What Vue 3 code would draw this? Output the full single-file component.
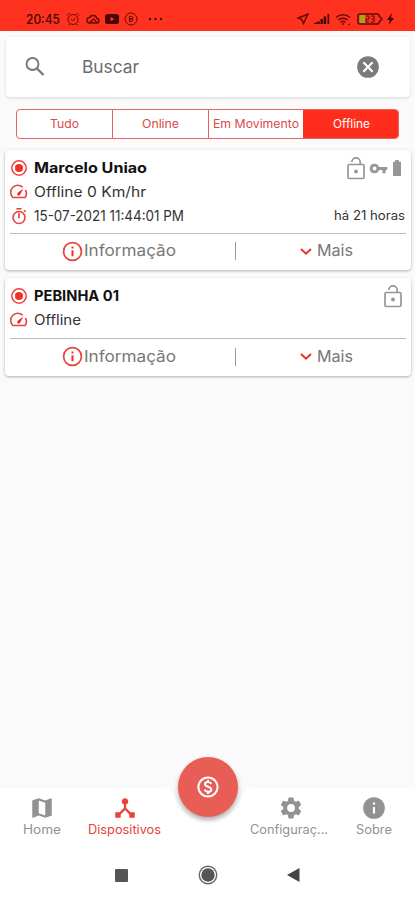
<script setup>
const devices = [
  { name: 'Marcelo Uniao', nameW: 113, status: 'Offline 0 Km/hr', statusW: 112, time: '15-07-2021 11:44:01 PM', ago: 'há 21 horas', full: true },
  { name: 'PEBINHA 01', nameW: 85, status: 'Offline', statusW: 47, full: false },
]
const tabs = [
  { label: 'Tudo', w: 29 },
  { label: 'Online', w: 37 },
  { label: 'Em Movimento', w: 86 },
  { label: 'Offline', w: 37, active: true },
]
</script>

<template>
  <div class="screen">
    <header class="status">
      <svg class="clock" width="36" height="16"><text x="0" y="13" textLength="34" lengthAdjust="spacingAndGlyphs">20:45</text></svg>
      <svg class="ic alarm" width="14" height="14" viewBox="0 0 14 14"><circle cx="7" cy="7.500" r="5" /><path d="M1 3.500 3.500 1M13 3.500 10.500 1M4.800 7l2 2 2.500-3M3.500 12l-1 1.500M10.500 12l1 1.500" /></svg>
      <svg class="ic cloud" width="15" height="12" viewBox="0 0 15 12"><path class="thick" d="M4 10h7.500a2.300 2.300 0 0 0 .3-4.600A4 4 0 0 0 4.500 4.500 2.800 2.800 0 0 0 4 10ZM5 9.500 8.500 6l3 3" /></svg>
      <svg class="tube" width="14" height="10" viewBox="0 0 14 10"><rect width="14" height="10" rx="2.500" fill="#470704" /><path d="M5.500 2.700v4.600L9.500 5z" fill="#ff321f" /></svg>
      <svg class="ic rec" width="14" height="14" viewBox="0 0 14 14"><circle cx="7" cy="7" r="6" /><path d="M5.500 4.500v5h2.300a1.300 1.300 0 0 0 0-2.500H5.500h2a1.200 1.200 0 0 0 0-2.500z" /></svg>
      <svg class="dots" width="15" height="4" viewBox="0 0 15 4"><circle cx="2" cy="2" r="1.200" /><circle cx="7.500" cy="2" r="1.200" /><circle cx="13" cy="2" r="1.200" /></svg>
      <span class="grow"></span>
      <svg class="ic nav-arrow" width="12" height="12" viewBox="0 0 12 12"><path class="thick" d="M10.800 1.200 1.200 5l3.600 1.500L6.500 10.500z" /></svg>
      <svg class="signal" width="17" height="12" viewBox="0 0 17 12"><path d="M0 11 4 9v2zM4.300 8.500h2.500V11H4.300zM7.500 6H10v5H7.500zM10.700 3.500h2.500V11h-2.500zM14.500 1h1.700v10h-1.700z" /></svg>
      <svg class="ic wifi" width="17" height="13" viewBox="0 0 17 13"><path class="thick" d="M1 4.500a10.500 10.500 0 0 1 14 0M3.300 7a7 7 0 0 1 9.400 0M5.500 9.300a4 4 0 0 1 5 0M7 11h2M13.500 11.500h1.500" /></svg>
      <svg class="ic battery" width="27" height="12" viewBox="0 0 27 12"><rect x="2.500" y="2" width="5.500" height="8" fill="#a5a51b" stroke="none" /><path class="thick" d="M3 1h17q2 0 2.500 2.500L25 6l-2.500 2.500Q22 11 20 11H3Q1 11 1 9V3q0-2 2-2z" /><path d="M9 3h3v3H9v3h3M14 3h3v6h-3M14.500 6H17" /></svg>
      <svg class="bolt" width="7" height="12" viewBox="0 0 7 12"><path d="M5 0 0 7h2.800L1.800 12 7 5H4.200z" /></svg>
    </header>

    <main>
      <div class="search">
        <svg class="mag" width="28" height="28" viewBox="0 0 28 28"><circle cx="11.500" cy="11" r="6" fill="none" stroke="#777" stroke-width="1.900" /><path d="m16 15.500 6.500 6.500" stroke="#777" stroke-width="2.300" /></svg>
        <svg class="grow-text" width="62" height="26"><text x="0" y="19" textLength="57" lengthAdjust="spacingAndGlyphs">Buscar</text></svg>
        <span class="grow"></span>
        <svg class="clear" width="26" height="26" viewBox="0 0 24 24"><path d="M12 2a10 10 0 1 0 0 20 10 10 0 0 0 0-20zm5 13.590L15.590 17 12 13.410 8.410 17 7 15.590 10.590 12 7 8.410 8.410 7 12 10.590 15.590 7 17 8.410 13.410 12z" /></svg>
      </div>

      <div class="tabs">
        <div v-for="t in tabs" :key="t.label" class="tab" :class="{ active: t.active }">
          <svg :width="t.w" height="16"><text x="0" y="12" :textLength="t.w" lengthAdjust="spacingAndGlyphs">{{ t.label }}</text></svg>
        </div>
      </div>

      <section v-for="d in devices" :key="d.name" class="card" :class="{ full: d.full }">
        <div class="row title">
          <svg class="red" width="18" height="18" viewBox="0 0 18 18"><circle cx="9" cy="9" r="7.200" fill="none" stroke="#e8423c" stroke-width="1.500" /><circle cx="9" cy="9" r="4" /></svg>
          <svg class="label name" :width="d.nameW" height="22"><text x="0" y="15.500" :textLength="d.nameW" lengthAdjust="spacingAndGlyphs">{{ d.name }}</text></svg>
          <span class="grow"></span>
          <svg class="lock" width="18" height="23" viewBox="0 0 18 23"><rect x="1" y="7.500" width="16" height="14" rx="1.200" /><path d="M4.800 5A4.200 4.200 0 0 1 13.200 5v2.500" /><circle class="dot" cx="9" cy="14.500" r="1.900" /></svg>
          <template v-if="d.full">
            <svg class="key" width="19" height="19" viewBox="0 0 24 24"><path d="M12.650 10A6 6 0 0 0 7 6a6 6 0 1 0 5.650 8H17v4h4v-4h2v-4zM7 14.500a2.500 2.500 0 1 1 0-5 2.500 2.500 0 0 1 0 5z" /></svg>
            <svg class="cell" width="8" height="16" viewBox="0 0 8 16"><path d="M2.200 0h3.600v1.800H8V16H0V1.800h2.200z" /></svg>
          </template>
        </div>
        <div class="row">
          <svg class="red" width="18" height="18" viewBox="0 0 18 18"><path d="M12.600 4.200A7 7 0 0 0 2.900 14.500h12.200A7 7 0 0 0 15.400 7" fill="none" stroke="#e8423c" stroke-width="1.600" /><path d="M13.500 5.500 7.700 9.700a1.600 1.600 0 1 0 2.300 2.200z" /></svg>
          <svg class="label" :width="d.statusW" height="22"><text x="0" y="16" :textLength="d.statusW" lengthAdjust="spacingAndGlyphs">{{ d.status }}</text></svg>
        </div>
        <div v-if="d.time" class="row">
          <svg class="red" width="18" height="18" viewBox="0 0 18 18"><circle cx="9" cy="10.500" r="6" fill="none" stroke="#e8423c" stroke-width="1.600" /><path d="M6.500 1h5v1.600h-5zM8.200 6.300h1.600v5H8.200zM13.600 3.800l1-1 1.500 1.500-1 1z" /></svg>
          <svg class="label" width="151" height="22"><text x="0" y="15.500" textLength="150" lengthAdjust="spacingAndGlyphs">{{ d.time }}</text></svg>
          <span class="grow"></span>
          <svg class="label ago" width="72" height="22"><text x="0" y="14.500" textLength="71" lengthAdjust="spacingAndGlyphs">{{ d.ago }}</text></svg>
        </div>
        <div class="actions">
          <div class="action info">
            <svg class="red" width="21" height="21" viewBox="0 0 21 21"><circle cx="10.500" cy="10.500" r="8.900" fill="none" stroke="#e8423c" stroke-width="1.700" /><path d="M9.500 5.500h2v2h-2zM9.500 9.300h2v6h-2z" /></svg>
            <svg width="93" height="26"><text x="0" y="18" textLength="92" lengthAdjust="spacingAndGlyphs">Informação</text></svg>
          </div>
          <i class="divider"></i>
          <div class="action more">
            <svg width="12" height="9" viewBox="0 0 12 9"><path d="m1 2 5 4.700L11 2" fill="none" stroke="#ee3124" stroke-width="2" /></svg>
            <svg width="37" height="26"><text x="0" y="18" textLength="36" lengthAdjust="spacingAndGlyphs">Mais</text></svg>
          </div>
        </div>
      </section>
    </main>

    <nav>
      <svg class="backdrop" width="415" height="62" viewBox="0 0 415 62"><path d="M0 0H164Q171 0 173 6A36 36 0 0 0 243 6Q245 0 252 0H415V62H0z" /></svg>
      <div class="item home">
        <svg width="26" height="26" viewBox="0 0 24 24"><path d="m20.500 3-.16.030L15 5.100 9 3 3.360 4.900A.5.5 0 0 0 3 5.380V20.500c0 .28.220.5.5.5l.16-.030L9 18.900l6 2.100 5.640-1.900a.5.5 0 0 0 .36-.48V3.500a.5.5 0 0 0-.5-.5zM15 19l-6-2.110V5l6 2.110z" /></svg>
        <svg width="38" height="18"><text x="0" y="13" textLength="38" lengthAdjust="spacingAndGlyphs">Home</text></svg>
      </div>
      <div class="item devices">
        <svg width="26" height="26" viewBox="0 0 24 24"><path d="m17 16-4-4V8.820A3 3 0 1 0 11 8.820V12l-4 4H3v5h5v-3.050l4-4.200 4 4.200V21h5v-5z" /></svg>
        <svg width="74" height="18"><text x="0" y="13" textLength="73" lengthAdjust="spacingAndGlyphs">Dispositivos</text></svg>
      </div>
      <button class="fab" aria-label="$"><svg width="24" height="24" viewBox="0 0 24 24"><circle cx="12" cy="12" r="9.600" /><path d="M15.200 9c-.5-1.200-1.600-1.900-3.200-1.900-1.800 0-3 .8-3 2.200 0 3.300 6.300 1.700 6.300 5.100 0 1.500-1.300 2.400-3.200 2.400-1.700 0-3-.8-3.400-2.200M12 5v2M12 17v2" /></svg></button>
      <div class="item config">
        <svg width="26" height="26" viewBox="0 0 24 24"><path d="M19.140 12.940c.04-.3.060-.61.060-.94 0-.32-.020-.64-.070-.94l2.030-1.580a.49.49 0 0 0 .12-.61l-1.920-3.320a.49.49 0 0 0-.59-.22l-2.390.96c-.5-.38-1.030-.7-1.620-.94L14.400 2.810a.48.48 0 0 0-.48-.41h-3.840a.47.47 0 0 0-.47.41L9.250 5.350c-.59.240-1.130.57-1.620.94l-2.390-.96a.48.48 0 0 0-.59.220L2.740 8.870a.47.47 0 0 0 .12.610l2.030 1.580c-.05.3-.09.63-.09.94s.020.64.070.94l-2.030 1.580a.49.49 0 0 0-.12.610l1.920 3.320c.12.22.37.29.59.22l2.390-.96c.5.38 1.030.7 1.620.94l.36 2.540c.05.24.24.41.48.41h3.840c.24 0 .44-.17.47-.41l.36-2.540c.59-.24 1.130-.56 1.620-.94l2.390.96c.22.080.47 0 .59-.22l1.920-3.320a.47.47 0 0 0-.12-.61zM12 15.600a3.600 3.600 0 1 1 0-7.200 3.600 3.600 0 0 1 0 7.200z" /></svg>
        <svg class="cut" width="79" height="18"><text x="0" y="13" textLength="78" lengthAdjust="spacingAndGlyphs">Configuraç...</text></svg>
      </div>
      <div class="item about">
        <svg width="26" height="26" viewBox="0 0 24 24"><path d="M12 2a10 10 0 1 0 0 20 10 10 0 0 0 0-20zm1 15h-2v-6h2zm0-8h-2V7h2z" /></svg>
        <svg width="36" height="18"><text x="0" y="13" textLength="36" lengthAdjust="spacingAndGlyphs">Sobre</text></svg>
      </div>
    </nav>
    <footer>
      <svg width="13" height="13"><rect width="13" height="13" rx="1" fill="#555" /></svg>
      <svg width="20" height="20" viewBox="0 0 20 20"><circle cx="10" cy="10" r="8.700" fill="none" stroke="#666" stroke-width="1.400" /><circle cx="10" cy="10" r="6.700" fill="#555" /></svg>
      <svg width="13" height="14" viewBox="0 0 13 14"><path d="M12.500 0v14L0 7z" fill="#444" /></svg>
    </footer>
  </div>
</template>

<style>
body { overflow: hidden; }
</style>
<style scoped>
* { box-sizing: border-box; }
svg { display: block; flex: none; overflow: visible; }
.screen { width: 415px; height: 900px; display: flex; flex-direction: column; background: #fafafa; font-family: Inter, "Noto Sans", sans-serif; }
.grow { flex: 1; }
.status { height: 31px; padding: 7px 21px 0 26px; display: flex; align-items: center; background: #ff321f; fill: #470704; }
.clock text { font-size: 12.500px; font-weight: 500; }
.ic { fill: none; stroke: #650b05; stroke-width: 1; }
.thick { stroke-width: 1.500; }
.alarm { margin-left: 4px; }
.cloud { margin-left: 5px; }
.tube { margin-left: 5px; }
.rec { margin-left: 5px; }
.dots { margin-left: 10px; }
.signal { margin-left: 4px; }
.wifi { margin-left: 5px; }
.battery { margin-left: 5px; }
.bolt { margin-left: 3px; }
main { flex: 1; padding: 6px 4px 0 5px; }
.search { height: 60px; margin: 0 1px; padding: 0 29px 0 15px; display: flex; align-items: center; background: #fff; border-radius: 4px; box-shadow: 0 1px 3px #00000024; }
.grow-text { margin-left: 33px; fill: #6b6b6b; font-size: 17px; }
.clear { fill: #7b7b7b; }
.tabs { height: 30px; margin: 12px 12px 0 11px; display: grid; grid-template-columns: 95px 96px 95px 1fr; border: 1px solid #e66561; border-radius: 4px; overflow: hidden; background: #fff; }
.tab { display: flex; align-items: center; justify-content: center; border-left: 1px solid #e66561; fill: #d94b47; font-size: 11.500px; }
.tab:first-child { border-left: 0; }
.tab.active { background: #ff2d1c; fill: #fff; border-color: #ff2d1c; }
.card { height: 98px; margin-top: 8px; padding: 6px 5px 0; display: flex; flex-direction: column; background: #fff; border-radius: 4px; box-shadow: 0 1px 3px #0000004d; }
.card.full { height: 120px; margin-top: 11px; }
.row { height: 23px; display: flex; align-items: center; }
.title { height: 24px; }
.title + .row { height: 24px; }
.red { fill: #ed3329; }
.label { margin-left: 6px; fill: #333; font-size: 14px; }
.name { fill: #111; font-weight: 700; }
.ago { font-size: 12.500px; }
.key, .cell { fill: #969696; }
.lock { margin-right: 4px; fill: none; stroke: #969696; stroke-width: 1.700; }
.lock .dot { fill: #969696; stroke: none; }
.full .lock { margin-right: 0; }
.key { margin-left: 4px; }
.cell { margin: 0 5px 0 5px; }
.actions { flex: 1; margin-top: 6px; padding-bottom: 2px; border-top: 1px solid #bbb; display: flex; align-items: center; fill: #777; font-size: 16px; }
.action { display: flex; align-items: center; }
.info { width: 225px; padding-left: 52px; }
.info .red { margin-right: 1px; }
.divider { width: 1px; height: 18px; background: #999; }
.more { gap: 5px; margin-left: 64px; }
nav { height: 62px; position: relative; display: grid; grid-template-columns: 83px 83px 84px 82px 83px; border-bottom: 1px solid #f4f4f4; }
.backdrop { position: absolute; inset: 0; fill: #fff; }
.item { position: relative; display: flex; flex-direction: column; align-items: center; padding-top: 7px; fill: #929292; font-size: 12.500px; }
.cut { margin-right: 4px; }
.devices { fill: #e94038; }
.fab { position: relative; top: -31px; width: 60px; height: 60px; margin: 0 auto; border: 0; border-radius: 50%; display: grid; place-items: center; background: #e95d57; box-shadow: 0 3px 5px #0000004d; }
.fab svg { fill: none; stroke: #fff; stroke-width: 2; }
footer { height: 50px; background: #fff; display: flex; align-items: center; padding-left: 115px; gap: 70px; }
footer svg:last-child { margin-left: -1px; }
</style>
